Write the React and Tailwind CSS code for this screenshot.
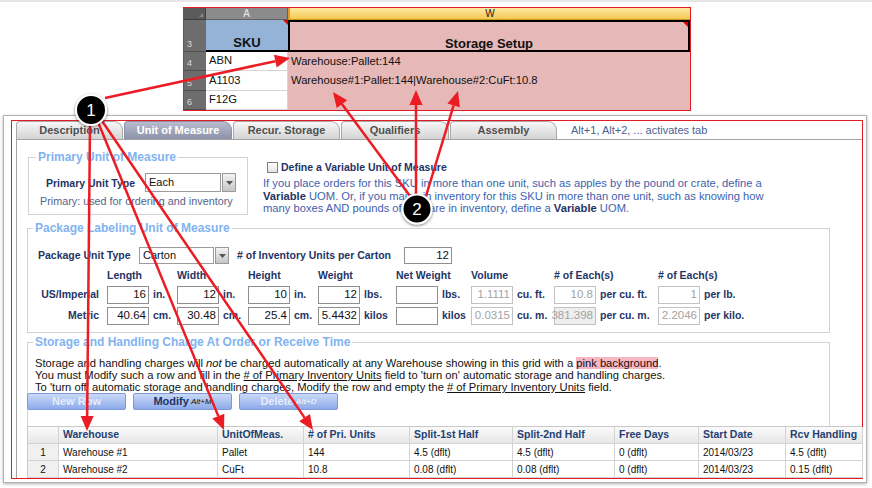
import React from 'react';

const RED = '#ec1c24';

// arrows: [x1, y1, tipX, tipY]
const arrows = [
  [105, 98, 290, 58],
  [90, 124, 87, 431],
  [98, 122, 224, 430],
  [100, 118, 313, 430],
  [410, 196, 333, 92],
  [416, 195, 416, 90],
  [426, 196, 458, 91],
];

function arrowParts(x1, y1, x2, y2, len = 15, half = 6.5) {
  const dx = x2 - x1;
  const dy = y2 - y1;
  const d = Math.hypot(dx, dy);
  const ux = dx / d;
  const uy = dy / d;
  const bx = x2 - ux * len;
  const by = y2 - uy * len;
  const px = -uy * half;
  const py = ux * half;
  return {
    bx,
    by,
    head: `${x2},${y2} ${bx + px},${by + py} ${bx - px},${by - py}`,
  };
}

function Sheet() {
  const rowHead = 'flex items-end pl-[3px] pb-[2px] bg-[#6d6d6d] border-b border-[#4f4f4f] text-[9px] text-[#dadada]';
  const aCell = 'flex items-center pl-[3px] bg-white border-r border-b border-[#d4d4d4] text-[#111]';
  const wCell = 'flex items-center pl-[3px] bg-[#e6b8b7] text-[#111]';
  return (
    <div className="ml-[183px] mt-[5px] h-[104px] w-[508px] border border-[#e31b23]">
      <div className="grid h-full grid-cols-[22px_82px_1fr] grid-rows-[12px_32px_19px_20px_19px] text-[11.2px] leading-none">
        {/* column headers */}
        <div className="flex items-end justify-end bg-[#5a5a5a] border-r border-b border-[#3f3f3f] pr-[2px] pb-[2px]">
          <div className="h-0 w-0 border-b-[4px] border-l-[4px] border-b-[#8a8a8a] border-l-transparent" />
        </div>
        <div className="flex items-center justify-center bg-[#8b8b8b] border-r border-b border-[#606060] text-[10px] text-[#ececec]">A</div>
        <div className="flex items-center justify-center border-l-2 border-l-[#e39a2d] border-b border-b-[#c99a2a] bg-gradient-to-b from-[#fdeaa0] to-[#f3c84c] text-[10px] text-[#222]">W</div>

        {/* row 3 */}
        <div className={rowHead}>3</div>
        <div className="relative flex items-end justify-center border-b-2 border-black bg-[#95b3d7] pb-[1px] text-[13px] font-bold text-[#111]">
          SKU
          <span className="absolute right-0 top-0 h-0 w-0 border-t-[5px] border-l-[5px] border-t-[#e00000] border-l-transparent" />
        </div>
        <div className="relative flex items-end justify-center border-2 border-black bg-[#e6b8b7] pb-[0px] text-[13px] font-bold text-[#111]">
          Storage Setup
          <span className="absolute right-0 top-0 h-0 w-0 border-t-[5px] border-l-[5px] border-t-[#e00000] border-l-transparent" />
        </div>

        <div className={rowHead}>4</div>
        <div className={aCell}>ABN</div>
        <div className={wCell}>Warehouse:Pallet:144</div>

        <div className={rowHead}>5</div>
        <div className={aCell}>A1103</div>
        <div className={wCell}>Warehouse#1:Pallet:144|Warehouse#2:CuFt:10.8</div>

        <div className={rowHead}>6</div>
        <div className={aCell}>F12G</div>
        <div className={wCell} />
      </div>
    </div>
  );
}

function Tab({ label, width, active }) {
  return (
    <div
      className={
        active
          ? `flex h-[18px] ${width} items-center justify-center rounded-tl-[4px] rounded-tr-[9px] border border-b-0 border-[#8c90a6] bg-gradient-to-b from-[#b9bccd] to-[#8d92aa] text-[11px] font-bold text-white`
          : `flex h-[18px] ${width} items-center justify-center rounded-tl-[4px] rounded-tr-[9px] border border-b-0 border-[#a9a9a9] bg-gradient-to-b from-[#f7f7f7] to-[#d4d4d4] text-[11px] font-bold text-[#505050]`
      }
    >
      {label}
    </div>
  );
}

function DropBtn({ h }) {
  return (
    <div className={`ml-[1px] flex w-[14px] ${h} items-center justify-center border border-[#9a9a9a] bg-gradient-to-b from-[#f4f4f4] to-[#c6c6c6]`}>
      <svg width="7" height="4" viewBox="0 0 7 4">
        <polygon points="0,0 7,0 3.5,4" fill="#555" />
      </svg>
    </div>
  );
}

function Box({ value, ro, shade }) {
  return (
    <div
      className={
        ro
          ? `flex h-[18px] w-[42px] items-center justify-end border border-[#c2c2c2] ${shade ? 'bg-[#eeeeee]' : 'bg-white'} pr-[2px] text-[11.5px] text-[#a3a3a3]`
          : 'flex h-[18px] w-[42px] items-center justify-end border border-[#8f8f8f] bg-white pr-[2px] text-[11.5px] text-[#111]'
      }
    >
      {value}
    </div>
  );
}

const lbl = 'font-bold text-[10.5px] text-[#1f3466]';
const legend = 'ml-[7px] px-[2px] text-[12px] font-bold leading-[14px] text-[#82b3f0]';

const imperial = [
  ['16', 'in.'],
  ['12', 'in.'],
  ['10', 'in.'],
  ['12', 'lbs.'],
  ['', 'lbs.'],
  ['1.1111', 'cu. ft.', true],
  ['10.8', 'per cu. ft.', true],
  ['1', 'per lb.', true],
];

const metric = [
  ['40.64', 'cm.'],
  ['30.48', 'cm.'],
  ['25.4', 'cm.'],
  ['5.4432', 'kilos'],
  ['', 'kilos'],
  ['0.0315', 'cu. m.', true],
  ['381.398', 'per cu. m.', true, true],
  ['2.2046', 'per kilo.', true],
];

const heads = ['Length', 'Width', 'Height', 'Weight', 'Net Weight', 'Volume', '# of Each(s)', '# of Each(s)'];

const gridCols = ['', 'Warehouse', 'UnitOfMeas.', '# of Pri. Units', 'Split-1st Half', 'Split-2nd Half', 'Free Days', 'Start Date', 'Rcv Handling'];
const gridRows = [
  ['1', 'Warehouse #1', 'Pallet', '144', '4.5 (dflt)', '4.5 (dflt)', '0 (dflt)', '2014/03/23', '4.5 (dflt)'],
  ['2', 'Warehouse #2', 'CuFt', '10.8', '0.08 (dflt)', '0.08 (dflt)', '0 (dflt)', '2014/03/23', '0.15 (dflt)'],
];

function MeasureRow({ label, items }) {
  return (
    <>
      <div className={`${lbl} flex items-center justify-end pr-[8px]`}>{label}</div>
      {items.map(([v, unit, ro, shade], i) => (
        <div key={i} className="flex items-center whitespace-nowrap">
          <Box value={v} ro={ro} shade={shade} />
          <span className={`${lbl} ml-[4px]`}>{unit}</span>
        </div>
      ))}
    </>
  );
}

function Panel() {
  return (
    <div className="ml-[3px] mt-[4px] h-[368px] w-[864px] border border-[#b3b3b3] pl-[7px] pt-[4px] shadow-[0_1px_3px_rgba(0,0,0,0.3)]">
      <div className="flex h-[359px] w-[852px] flex-col border border-[#e31b23] pl-[4px]">
        {/* tabs */}
        <div className="flex h-[18px] items-end gap-[1px]">
          <Tab label="Description" width="w-[107px]" />
          <Tab label="Unit of Measure" width="w-[108px]" active />
          <Tab label="Recur. Storage" width="w-[107px]" />
          <Tab label="Qualifiers" width="w-[108px]" />
          <Tab label="Assembly" width="w-[107px]" />
          <span className="ml-[13px] self-center text-[11px] text-[#4b5f93]">Alt+1, Alt+2, ... activates tab</span>
        </div>

        {/* tab body */}
        <div className="flex flex-1 flex-col border-l border-t border-[#a3a3a3]">
          <div className="flex">
            <fieldset className="ml-[11px] mt-[10px] h-[65px] w-[220px] border border-[#d2d2d2]">
              <legend className={legend}>Primary Unit of Measure</legend>
              <div className="mt-[9px] flex items-center pl-[17px]">
                <span className={`${lbl} w-[99px] pt-[2px]`}>Primary Unit Type</span>
                <div className="flex h-[19px] w-[76px] items-center border border-[#9c9c9c] bg-white pl-[3px] text-[11px] text-[#111]">Each</div>
                <DropBtn h="h-[19px]" />
              </div>
              <div className="mt-[3px] pl-[11px] text-[10.8px] leading-[13px] text-[#55648a]">Primary: used for ordering and inventory</div>
            </fieldset>

            <div className="ml-[15px] mt-[20px]">
              <div className="flex items-center pl-[4px] leading-[14px]">
                <div className="h-[11px] w-[11px] border border-[#7d7d7d] bg-gradient-to-b from-white to-[#e3e3e3]" />
                <span className={`${lbl} ml-[3px]`}>Define a Variable Unit of Measure</span>
              </div>
              <div className="mt-[3px] whitespace-nowrap text-[11.2px] leading-[12.5px] text-[#3e62ad]">
                If you place orders for this SKU in more than one unit, such as apples by the pound or crate, define a
                <br />
                <b className="text-[#1f3466]">Variable</b> UOM. Or, if you maintain inventory for this SKU in more than one unit, such as knowing how
                <br />
                many boxes AND pounds of item are in inventory, define a <b className="text-[#1f3466]">Variable</b> UOM.
              </div>
            </div>
          </div>

          <fieldset className="ml-[10px] mt-[6px] h-[112px] w-[803px] border border-[#d2d2d2]">
            <legend className="ml-[5px] px-[2px] text-[12px] font-bold leading-[14px] text-[#82b3f0]">Package Labeling Unit of Measure</legend>
            <div className="mt-[12px] flex items-center pl-[10px]">
              <span className={`${lbl} w-[101px]`}>Package Unit Type</span>
              <div className="flex h-[17px] w-[75px] items-center border border-[#9c9c9c] bg-white pl-[3px] text-[11px] text-[#111]">Carton</div>
              <DropBtn h="h-[17px]" />
              <span className={`${lbl} ml-[8px] w-[167px]`}># of Inventory Units per Carton</span>
              <div className="flex h-[17px] w-[48px] items-center justify-end border border-[#8f8f8f] bg-white pr-[2px] text-[11.5px] text-[#111]">12</div>
            </div>
            <div className="mt-[5px] grid grid-cols-[69px_70px_71px_70px_78px_75px_83px_104px_1fr] grid-rows-[14px_18px_18px] gap-y-[3px] pl-[10px]">
              <div />
              {heads.map((h, i) => (
                <div key={i} className={`${lbl} flex items-center`}>{h}</div>
              ))}
              <MeasureRow label="US/Imperial" items={imperial} />
              <MeasureRow label="Metric" items={metric} />
            </div>
          </fieldset>

          <fieldset className="ml-[10px] mt-[2px] flex h-[91px] w-[803px] flex-col border border-b-0 border-[#d2d2d2]">
            <legend className="ml-[5px] px-[2px] text-[12px] font-bold leading-[14px] text-[#82b3f0]">Storage and Handling Charge At Order or Receive Time</legend>
            <div className="mt-[8px] whitespace-nowrap pl-[7px] text-[11.2px] leading-[12px] text-[#111]">
              Storage and handling charges will <i>not</i> be charged automatically at any Warehouse showing in this grid with a{' '}
              <span className="bg-[#f7b6c2]">pink background</span>.
              <br />
              You must Modify such a row and fill in the <u># of Primary Inventory Units</u> field to 'turn on' automatic storage and handling charges.
              <br />
              To 'turn off' automatic storage and handling charges, Modify the row and empty the <u># of Primary Inventory Units</u> field.
            </div>
            <div className="-ml-px mt-auto flex gap-[7px]">
              <div className="flex h-[17px] w-[99px] items-center justify-center rounded-[2px] border border-[#7d9ad8] bg-gradient-to-b from-[#cad9f8] to-[#8eaae9] text-[11px] font-bold text-[#e6edfb]">New Row</div>
              <div className="flex h-[17px] w-[99px] items-center justify-center gap-[2px] rounded-[2px] border border-[#7d9ad8] bg-gradient-to-b from-[#cad9f8] to-[#8eaae9] text-[11px] font-bold text-[#1f3466]">
                Modify <i className="text-[8px] font-normal text-[#111]">Alt+M</i>
              </div>
              <div className="flex h-[17px] w-[99px] items-center justify-center gap-[2px] rounded-[2px] border border-[#7d9ad8] bg-gradient-to-b from-[#cad9f8] to-[#8eaae9] text-[11px] font-bold text-[#e6edfb]">
                Delete <i className="text-[8px]">Alt+D</i>
              </div>
            </div>
          </fieldset>

          <div className="ml-[10px] grid w-[835px] grid-cols-[31px_159px_86px_106px_103px_102px_84px_87px_77px] grid-rows-[17px_17px_17px] border-l border-t border-[#c9c9c9]">
            {gridCols.map((c, i) => (
              <div key={i} className="flex items-center border-b border-r border-[#d3d3d3] bg-gradient-to-b from-[#fbfbfb] to-[#e7e7e7] pl-[4px] text-[10.5px] font-bold text-[#243f73]">
                {c}
              </div>
            ))}
            {gridRows.map((r, ri) =>
              r.map((c, i) => (
                <div
                  key={`${ri}-${i}`}
                  className={
                    i === 0
                      ? 'flex items-center justify-center border-b border-r border-[#d3d3d3] bg-[#f0f0f0] text-[10px] text-[#111]'
                      : 'flex items-center border-b border-r border-[#d3d3d3] bg-white pl-[4px] text-[10px] text-[#111]'
                  }
                >
                  {c}
                </div>
              ))
            )}
          </div>
        </div>
      </div>
    </div>
  );
}

function Callouts() {
  return (
    <svg className="pointer-events-none absolute left-0 top-0" width="872" height="488" viewBox="0 0 872 488">
      <defs>
        <filter id="sh" x="-50%" y="-50%" width="200%" height="200%">
          <feDropShadow dx="0" dy="1" stdDeviation="1.5" floodColor="#000" floodOpacity="0.55" />
        </filter>
      </defs>
      {arrows.map(([x1, y1, x2, y2], i) => {
        const a = arrowParts(x1, y1, x2, y2);
        return (
          <g key={i}>
            <line x1={x1} y1={y1} x2={a.bx} y2={a.by} stroke={RED} strokeWidth="2.5" />
            <polygon points={a.head} fill={RED} />
          </g>
        );
      })}
      <g filter="url(#sh)">
        <circle cx="91" cy="110" r="15" fill="#000" stroke="#fff" strokeWidth="2" />
        <circle cx="417" cy="209" r="14.5" fill="#000" stroke="#fff" strokeWidth="2" />
      </g>
      <text x="91" y="116" textAnchor="middle" fill="#fff" fontSize="17" fontFamily="Liberation Sans, Arial, sans-serif">1</text>
      <text x="417" y="215" textAnchor="middle" fill="#fff" fontSize="17" fontFamily="Liberation Sans, Arial, sans-serif">2</text>
    </svg>
  );
}

export default function App() {
  return (
    <div className="relative h-[488px] w-[872px] overflow-hidden bg-white font-['Liberation_Sans',Arial,sans-serif]">
      <div className="h-[2px] bg-[#e6e6e6]" />
      <Sheet />
      <Panel />
      <Callouts />
    </div>
  );
}
